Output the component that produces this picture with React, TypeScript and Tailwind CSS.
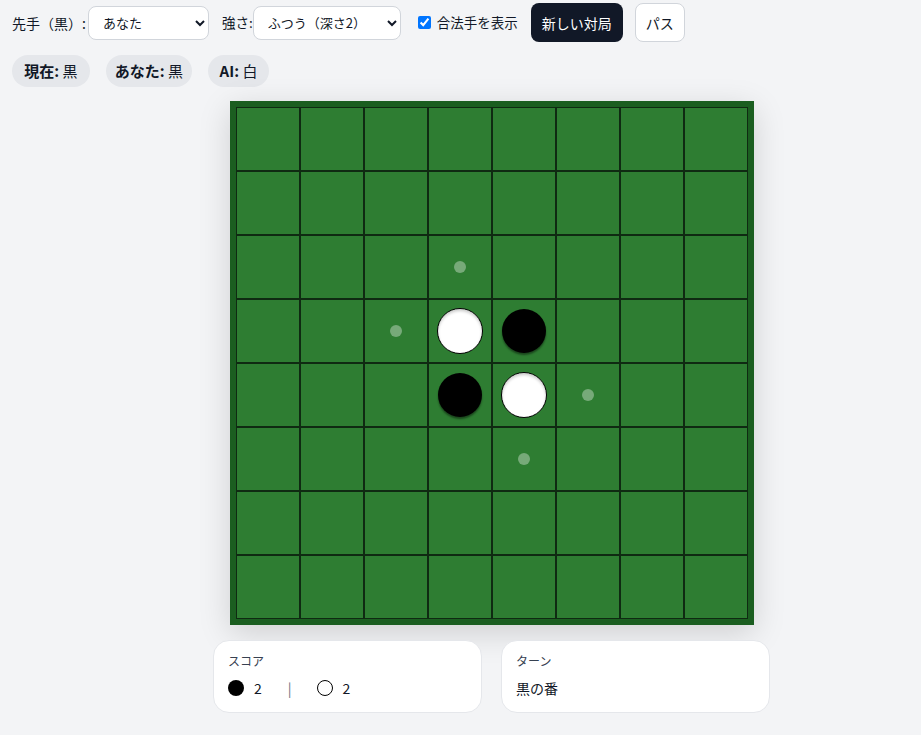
const N = 8;

function initialBoard() {
    const b: number[][] = Array.from({ length: N }, () => Array(N).fill(0));
    b[3][3] = 2;
    b[3][4] = 1;
    b[4][3] = 1;
    b[4][4] = 2;
    return b;
}

const legal = new Set(["2-3", "3-2", "4-5", "5-4"]);

export default function App() {
    const board = initialBoard();

    return (
        <div className="min-h-screen bg-[#f3f4f6] text-[#111827] px-3 pt-[3px]" style={{ fontFamily: '"Noto Sans CJK JP", "Noto Sans", sans-serif' }}>
            {/* controls */}
            <div className="flex items-center text-sm">
                <label className="flex items-center">
                    <span className="text-[14px]">先手（黒）:</span>
                    <select className="ml-[2px] h-[34px] w-[121px] rounded-lg border border-[#d1d5db] bg-white pl-[10px] pr-2 text-[13px]">
                        <option>あなた</option>
                        <option>AI</option>
                    </select>
                </label>
                <label className="ml-[13px] flex items-center">
                    <span className="text-[13.5px]">強さ:</span>
                    <select className="ml-0 h-[34px] w-[148px] rounded-lg border border-[#d1d5db] bg-white pl-[10px] pr-2 text-[13px]">
                        <option>ふつう（深さ2）</option>
                    </select>
                </label>
                <label className="ml-[17px] flex items-center gap-[6px]">
                    <input type="checkbox" defaultChecked className="h-[13px] w-[13px]" />
                    <span className="text-[13.5px]">合法手を表示</span>
                </label>
                <button className="ml-[13px] h-[39px] w-[92px] rounded-lg bg-[#111827] text-[14px] text-white">新しい対局</button>
                <button className="ml-3 h-[39px] w-[50px] rounded-lg border border-[#d1d5db] bg-white text-[14px]">パス</button>
            </div>

            {/* status badges */}
            <div className="mt-[13px] flex items-center gap-4 text-[15px]">
                <span className="flex h-8 w-[78px] items-center justify-center rounded-full bg-[#e5e7eb]">
                    <b className="font-bold">現在:</b>&nbsp;黒
                </span>
                <span className="flex h-8 w-[86px] items-center justify-center rounded-full bg-[#e5e7eb]">
                    <b className="font-bold">あなた:</b>&nbsp;黒
                </span>
                <span className="flex h-8 w-[61px] items-center justify-center rounded-full bg-[#e5e7eb]">
                    <b className="font-bold">AI:</b>&nbsp;白
                </span>
            </div>

            <div className="ml-[201px] mt-[14px] flex w-[557px] flex-col items-center">
                {/* board */}
                <div className="bg-[#1b5e20] p-[6px] shadow-[0_8px_30px_rgba(0,0,0,0.15)]">
                    <div className="grid grid-cols-8">
                        {board.map((row, r) =>
                            row.map((v, c) => (
                                <div key={`${r}-${c}`} className="flex h-16 w-16 items-center justify-center border border-[#0f2a12] bg-[#2e7d32]">
                                    {v === 1 && <div className="h-[44px] w-[44px] rounded-full bg-black shadow-[0_2px_2px_rgba(0,0,0,0.45)]" />}
                                    {v === 2 && <div className="h-[46px] w-[46px] rounded-full border border-black bg-white shadow-[inset_0_2px_3px_rgba(0,0,0,0.2)]" />}
                                    {v === 0 && legal.has(`${r}-${c}`) && <div className="h-3 w-3 rounded-full bg-white/35" />}
                                </div>
                            ))
                        )}
                    </div>
                </div>

                {/* info cards */}
                <div className="mt-[15px] grid w-full grid-cols-2 gap-[19px]">
                    <div className="h-[73px] rounded-2xl border border-[#e5e7eb] bg-white px-[14px] pt-[12px]">
                        <div className="text-xs text-[#374151]">スコア</div>
                        <div className="mt-[9px] flex items-center text-sm">
                            <span className="h-4 w-4 rounded-full bg-black" />
                            <span className="ml-[10px]">2</span>
                            <span className="ml-[26px] text-[#6b7280]">|</span>
                            <span className="ml-[25px] h-4 w-4 rounded-full border border-black bg-white" />
                            <span className="ml-[10px]">2</span>
                        </div>
                    </div>
                    <div className="h-[73px] rounded-2xl border border-[#e5e7eb] bg-white px-[14px] pt-[12px]">
                        <div className="text-xs text-[#374151]">ターン</div>
                        <div className="mt-[9px] text-sm">黒の番</div>
                    </div>
                </div>
            </div>
        </div>
    );
}
